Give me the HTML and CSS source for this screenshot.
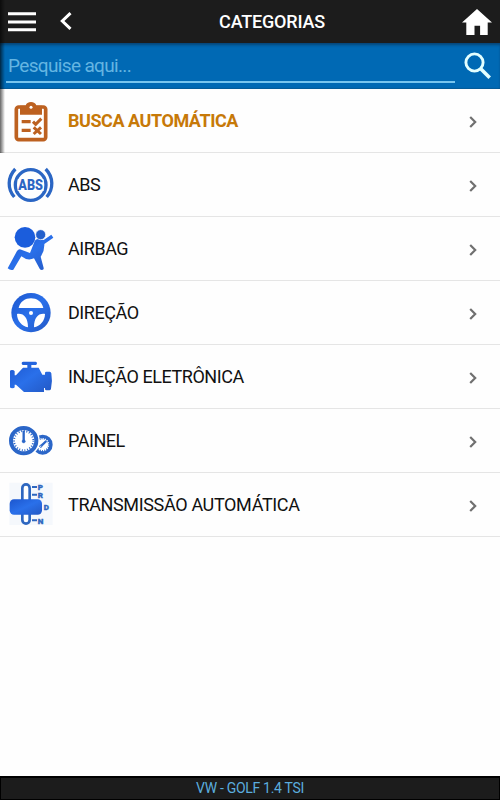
FILE: index.html
```html
<!DOCTYPE html>
<html lang="pt-BR">
<head>
    <meta charset="UTF-8">
    <meta name="viewport" content="width=device-width, initial-scale=1.0">
    <title>Categorias</title>
    <link rel="stylesheet" href="styles.css">
</head>
<body>
    <header class="topbar">
        <div class="left">
            <svg class="menu" viewBox="0 0 28 20"><path d="M0 1.7h28M0 10h28M0 17.7h28" stroke="#fff" stroke-width="3"/></svg>
            <svg class="back" viewBox="0 0 12 18"><path d="M10.5 1.2 2.3 9l8.2 7.8" fill="none" stroke="#fff" stroke-width="3"/></svg>
        </div>
        <h1>CATEGORIAS</h1>
        <svg class="home" viewBox="0 0 30 26"><path d="M15 0 0 13.5h4.3V26h8.2v-9.3h5.6V26h7.6V13.5H30z" fill="#fff"/></svg>
    </header>
    <div class="search">
        <input type="text" placeholder="Pesquise aqui...">
        <svg viewBox="0 0 28 28"><circle cx="10.5" cy="10.5" r="8.6" fill="none" stroke="#e3ffff" stroke-width="2.9"/><path d="m16.5 16.5 9.2 9.2" stroke="#e3ffff" stroke-width="3.6"/></svg>
    </div>
    <svg class="defs">
        <linearGradient id="blue" x1="0" y1="0" x2="1" y2="1">
            <stop offset="0" stop-color="#1c56ce"/>
            <stop offset=".5" stop-color="#2a70ea"/>
            <stop offset="1" stop-color="#2358c4"/>
        </linearGradient>
    </svg>
    <ul class="list">
        <li class="auto">
            <svg class="icon" viewBox="18 21 144 144">
                <rect x="49" y="51" width="88" height="98" rx="7" fill="#fff" stroke="#bd6120" stroke-width="11"/>
                <path d="M60 47h17c2-15 30-15 32 0h17v27H60z" fill="#bd6120"/>
                <circle cx="93" cy="52" r="4.5" fill="#fff"/>
                <path d="M65 95h27M65 121h27" stroke="#bd6120" stroke-width="10"/>
                <path d="m99 95 8 8 17-17M101 112l22 20M123 112l-22 20" fill="none" stroke="#bd6120" stroke-width="9"/>
            </svg>
            <span>BUSCA AUTOMÁTICA</span>
            <svg class="arrow" viewBox="0 0 8 12"><path d="m1.2 1 5 5-5 5"/></svg>
        </li>
        <li>
            <svg class="icon" viewBox="18 21 144 144">
                <g fill="none" stroke="#2b66c4" stroke-width="10">
                    <circle cx="92" cy="93" r="46"/>
                    <path d="M46 45c-24 25-24 60-3 84M137 45c24 25 24 60 3 84"/>
                </g>
                <path d="M53 76h78v35H53z" fill="#fff"/>
                <text x="92" y="109" class="abs" textLength="74" lengthAdjust="spacingAndGlyphs">ABS</text>
            </svg>
            <span>ABS</span>
            <svg class="arrow" viewBox="0 0 8 12"><path d="m1.2 1 5 5-5 5"/></svg>
        </li>
        <li>
            <svg class="icon" viewBox="18 21 144 144">
                <path d="M23 151 51 99q5-7 13-4l26 10 13-33q3-10 14-9l14 3 23-16 6 9-27 19q1 21-11 38l9 34q1 6-5 6-5 0-7-4l-17-31q-19 9-38-6l-24 40q-9 3-17-4z" fill="url(#blue)"/>
                <circle cx="75" cy="58" r="31" fill="#1b5ddc"/>
                <circle cx="122" cy="50" r="15" fill="#2360cc" stroke="#fff" stroke-width="2"/>
            </svg>
            <span>AIRBAG</span>
            <svg class="arrow" viewBox="0 0 8 12"><path d="m1.2 1 5 5-5 5"/></svg>
        </li>
        <li>
            <svg class="icon" viewBox="18 21 144 144">
                <circle cx="93" cy="92" r="59" fill="url(#blue)"/>
                <path d="M56 78c8-39 66-39 74 0zM51 96c20-3 33 11 33 40-18-3-33-20-33-40zM135 96c-20-3-33 11-33 40 18-3 33-20 33-40z" fill="#fff"/>
                <circle cx="93" cy="93" r="6" fill="#fff"/>
            </svg>
            <span>DIREÇÃO</span>
            <svg class="arrow" viewBox="0 0 8 12"><path d="m1.2 1 5 5-5 5"/></svg>
        </li>
        <li>
            <svg class="icon" viewBox="18 21 144 144">
                <path d="M69 47h38q4 0 4 5t-4 5H94v8h22l11 21h8v-5q0-4 4-4h10q4 0 5 5 4 22-1 46-1 5-5 5h-9q-4 0-4-4v-3h-3v12H72l-24-22h-4v8q-1 3-7 3-6 0-7-3V76q0-4 6-4t8 4v12h4l21-23h13v-8H69q-4 0-4-5t4-5z" fill="url(#blue)"/>
            </svg>
            <span>INJEÇÃO ELETRÔNICA</span>
            <svg class="arrow" viewBox="0 0 8 12"><path d="m1.2 1 5 5-5 5"/></svg>
        </li>
        <li>
            <svg class="icon" viewBox="18 21 144 144">
                <g fill="#fff" stroke="#2b66c8">
                    <circle cx="128" cy="104" r="25" stroke-width="10"/>
                    <circle cx="128" cy="104" r="19" fill="none" stroke-width="6" stroke-dasharray="3 4"/>
                    <path d="m121 110 18-17" stroke-width="7"/>
                    <circle cx="122" cy="109" r="3" stroke-width="3"/>
                    <circle cx="71" cy="92" r="46" stroke="#fff" stroke-width="5"/>
                    <circle cx="71" cy="92" r="38" stroke-width="12"/>
                    <circle cx="71" cy="92" r="29" fill="none" stroke-width="6" stroke-dasharray="3 5"/>
                    <path d="M71 94V62" stroke-width="7"/>
                    <circle cx="71" cy="94" r="5" fill="#2b66c8"/>
                </g>
            </svg>
            <span>PAINEL</span>
            <svg class="arrow" viewBox="0 0 8 12"><path d="m1.2 1 5 5-5 5"/></svg>
        </li>
        <li>
            <svg class="icon" viewBox="18 21 144 144">
                <path d="M28 26h130v127H28z" fill="#f5f8fc"/>
                <rect x="67" y="31" width="22" height="118" rx="11" fill="#fff" stroke="#2e67c0" stroke-width="8"/>
                <rect x="29" y="76" width="97" height="46" rx="13" fill="url(#blue)"/>
                <path d="M96 39h15M96 62h15M96 139h15" stroke="#2e67c0" stroke-width="6"/>
                <g class="gear">
                    <text x="113" y="47">P</text>
                    <text x="113" y="71">R</text>
                    <text x="131" y="107">D</text>
                    <text x="113" y="149">N</text>
                </g>
            </svg>
            <span>TRANSMISSÃO AUTOMÁTICA</span>
            <svg class="arrow" viewBox="0 0 8 12"><path d="m1.2 1 5 5-5 5"/></svg>
        </li>
    </ul>
    <footer>VW - GOLF 1.4 TSI</footer>
    <div class="edge"></div>
</body>
</html>
```

FILE: styles.css
```css
* {
    box-sizing: border-box;
}
body {
    margin: 0;
    height: 100vh;
    display: flex;
    flex-direction: column;
    background: #fefefe;
    font-family: Roboto, sans-serif;
    color: #111;
}
.topbar {
    height: 43px;
    display: grid;
    grid-template-columns: 1fr auto 1fr;
    align-items: center;
    padding: 0 8px;
    background: #1c1c1c;
}
.left {
    display: flex;
    align-items: center;
}
.menu {
    width: 28px;
    height: 20px;
    margin-top: 1px;
}
.back {
    width: 12px;
    height: 18px;
    margin-left: 24px;
    margin-top: -2px;
}
h1 {
    margin: 0 -22px 0 22px;
    font-size: 18px;
    font-weight: 500;
    line-height: 24px;
    letter-spacing: -0.2px;
    color: #fff;
}
.home {
    width: 30px;
    height: 26px;
    justify-self: end;
}
.search {
    height: 46px;
    display: flex;
    justify-content: space-between;
    padding: 0 8px 0 6px;
    background: #0069b4;
    box-shadow: inset 0 3px 3px -1px #064475, inset 0 -1px 1px #075b96;
}
.search input {
    width: 449px;
    height: 40px;
    padding: 7px 2px 0;
    border: none;
    border-bottom: 2px solid #78c5ee;
    outline: none;
    background: none;
    font: 19px Roboto, sans-serif;
    letter-spacing: -0.65px;
    color: #fff;
}
.search input::placeholder {
    color: #64b5e2;
}
.search svg {
    width: 28px;
    height: 28px;
    margin-top: 9px;
}
.defs {
    position: absolute;
    width: 0;
    height: 0;
}
.list {
    flex: 1;
    margin: 0;
    padding: 0;
    list-style: none;
}
.list li {
    display: flex;
    align-items: center;
    height: 64px;
    padding: 1px 23px 0 6px;
    border-bottom: 1px solid #e5e5e5;
    font-size: 18px;
    letter-spacing: -0.45px;
}
.list li:last-child {
    letter-spacing: -0.35px;
}
.list span {
    flex: 1;
    margin-left: 14px;
    line-height: 22px;
}
.list .auto span {
    font-weight: 700;
    color: #c77908;
}
.icon {
    width: 48px;
    height: 48px;
}
.arrow {
    width: 8px;
    height: 12px;
    margin-top: 1px;
    fill: none;
    stroke: #707070;
    stroke-width: 2.2;
}
.abs {
    font: 900 43px Roboto, sans-serif;
    letter-spacing: 0;
    text-anchor: middle;
    fill: #2b66c4;
}
.gear {
    font: 900 24px Roboto, sans-serif;
    letter-spacing: 0;
    fill: #2e67c0;
    stroke: #2e67c0;
}
footer {
    height: 24px;
    border: 1px solid #000;
    border-top-width: 2px;
    background: #1c1c1c;
    color: #5badde;
    font-size: 14px;
    line-height: 20px;
    text-align: center;
    letter-spacing: -0.3px;
}
/* drawer shadow along the left side */
.edge {
    position: absolute;
    top: 0;
    left: 0;
    width: 5px;
    height: 153px;
    background: linear-gradient(to right, rgba(0, 0, 0, 0.6), rgba(0, 0, 0, 0));
}
```
